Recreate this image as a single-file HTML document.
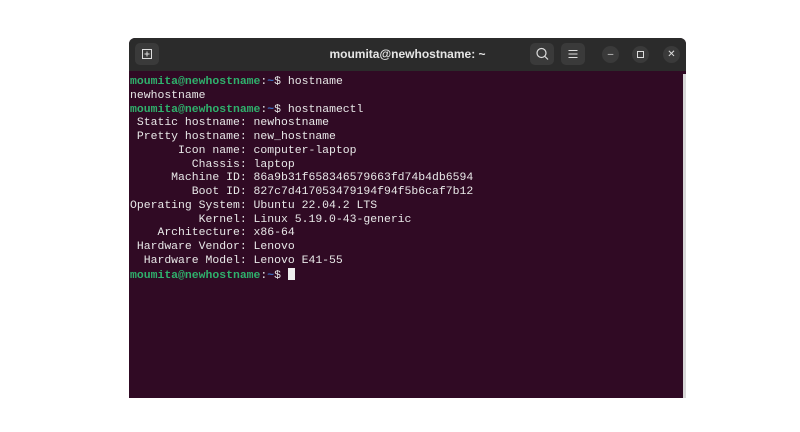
<!DOCTYPE html>
<html><head><meta charset="utf-8"><style>
html,body{margin:0;padding:0;background:#fff;width:800px;height:432px;overflow:hidden}
.win{position:absolute;left:129px;top:38px;width:557px;height:360px;background:#300a24;border-radius:6px 6px 0 0;overflow:hidden}
.tb{position:absolute;left:0;top:0;width:557px;height:33px;background:#2b2b2b}
.title{position:absolute;left:0;right:0;top:9px;text-align:center;color:#e6e6e6;font:bold 12px "Liberation Sans",sans-serif}
.btn{position:absolute;top:5px;width:24px;height:22px;background:#3a3a3a;border-radius:5px}
.cb{position:absolute;top:8px;width:17px;height:17px;border-radius:50%;background:#3a3a3a;color:#ddd;font:10px "Liberation Sans",sans-serif;text-align:center;line-height:17px}
pre{position:absolute;left:1px;top:37px;margin:0;font:11.45px/13.75px "Liberation Mono",monospace;color:#e8e8e8;white-space:pre}
.g{color:#2fb06c;font-weight:bold}.b{color:#3a6fc4;font-weight:bold}
.cur{display:inline-block;width:7px;height:12px;background:#eee;vertical-align:-2px}
.sb{position:absolute;left:554px;top:36px;width:3px;height:324px;background:#d8d8d8}
</style></head><body>
<div class="win">
<div class="tb">
<div class="btn" style="left:6px"><svg width="24" height="22"><rect x="7.5" y="6.5" width="9" height="9" fill="none" stroke="#ddd" stroke-width="1"/><path d="M12 8.5v5M9.5 11h5" stroke="#ddd"/></svg></div>
<div class="title">moumita@newhostname: ~</div>
<div class="btn" style="left:401px"><svg width="24" height="22"><circle cx="11.5" cy="10" r="4.5" fill="none" stroke="#ddd" stroke-width="1.2"/><path d="M15 13.5l3 3" stroke="#ddd" stroke-width="1.2"/></svg></div>
<div class="btn" style="left:432px"><svg width="24" height="22"><path d="M7.5 7.5h9M7.5 11h9M7.5 14.5h9" stroke="#ddd" stroke-width="1.1"/></svg></div>
<div class="cb" style="left:473px">–</div>
<div class="cb" style="left:503px"><svg width="17" height="17"><rect x="5.5" y="5.5" width="6" height="6" fill="none" stroke="#ddd"/></svg></div>
<div class="cb" style="left:534px">✕</div>
</div>
<pre><span class="g">moumita@newhostname</span>:<span class="b">~</span>$ hostname
newhostname
<span class="g">moumita@newhostname</span>:<span class="b">~</span>$ hostnamectl
 Static hostname: newhostname
 Pretty hostname: new_hostname
       Icon name: computer-laptop
         Chassis: laptop
      Machine ID: 86a9b31f658346579663fd74b4db6594
         Boot ID: 827c7d417053479194f94f5b6caf7b12
Operating System: Ubuntu 22.04.2 LTS
          Kernel: Linux 5.19.0-43-generic
    Architecture: x86-64
 Hardware Vendor: Lenovo
  Hardware Model: Lenovo E41-55
<span class="g">moumita@newhostname</span>:<span class="b">~</span>$ <span class="cur"></span></pre>
<div class="sb"></div>
</div>
</body></html>
